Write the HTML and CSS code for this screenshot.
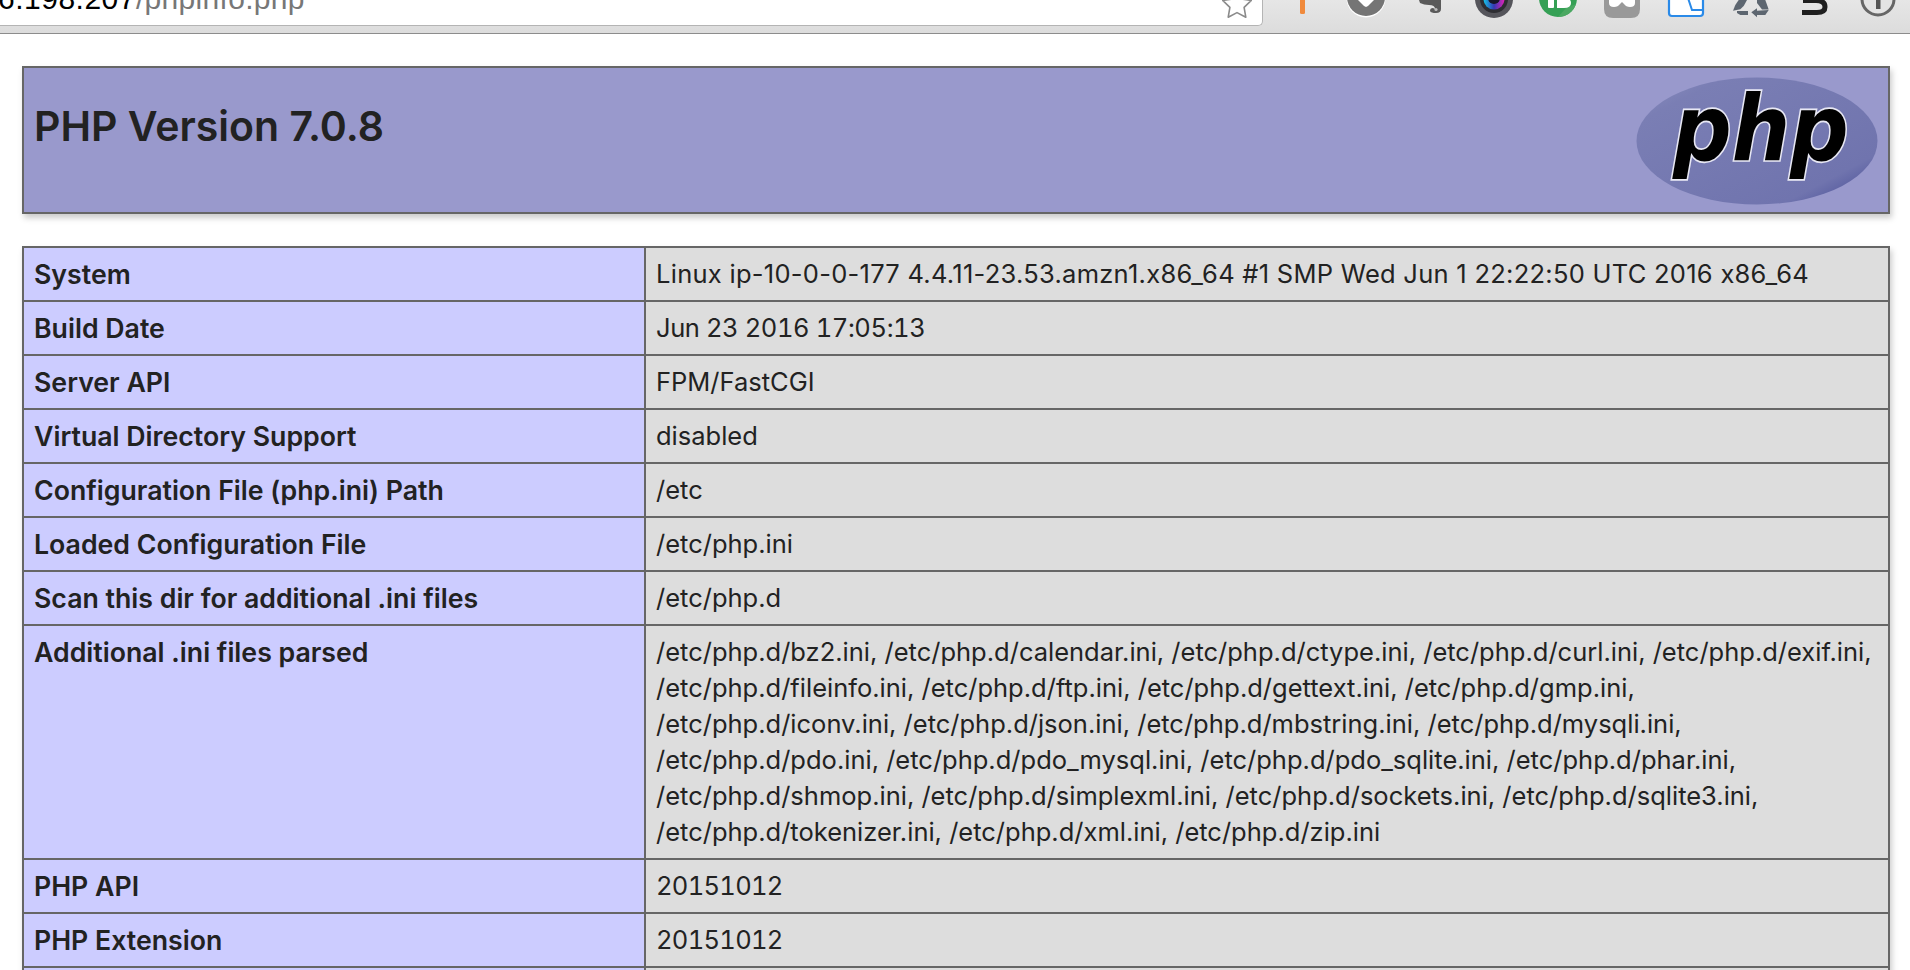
FILE: index.html
```html
<!DOCTYPE html>
<html lang="en">
<head>
<meta charset="utf-8">
<title>phpinfo()</title>
<link rel="stylesheet" href="styles.css">
</head>
<body>
<div class="toolbar">
  <div class="omnibox">
    <div class="url"><span class="host">6.198.207</span><span class="path">/phpinfo.php</span></div>
    <svg class="star" width="30" height="25" viewBox="0 0 30 25"><polygon points="15,-10 19.4,-1 29.3,0.4 22.1,7.4 23.8,17.2 15,12.6 6.2,17.2 7.9,7.4 0.7,0.4 10.6,-1" fill="#fff" stroke="#8a8a8a" stroke-width="1.6" stroke-linejoin="round"/></svg>
  </div>
  <div class="tools">
    <svg class="tool" viewBox="0 0 64 34"><rect x="30" y="-2" width="5" height="16" rx="1.5" fill="#f08a3c"/></svg>
    <svg class="tool" viewBox="0 0 64 34"><circle cx="32" cy="-2" r="19.5" fill="#fff"/><circle cx="32" cy="-3" r="19" fill="#757575"/><polygon points="22,-2 42,-2 34,6 32,7 30,6" fill="#fff"/></svg>
    <svg class="tool" viewBox="0 0 64 34"><path d="M21 0 H43 V9 Q43 13 38 13 Q33 13 32 11 Q32 8 35 8 L37 9 Q37 5 31 5 Q26 5 22 3 Z" fill="#5a5a5a"/><circle cx="38" cy="9.5" r="1.6" fill="#bbb"/></svg>
    <svg class="tool" viewBox="0 0 64 34"><defs><linearGradient id="lens" x1="0" x2="1" y1="0" y2="0"><stop offset="0" stop-color="#15c4e8"/><stop offset=".5" stop-color="#3438b0"/><stop offset="1" stop-color="#e323b8"/></linearGradient></defs><circle cx="32" cy="-1" r="19" fill="#55555b"/><circle cx="32" cy="-1" r="14" fill="#2d2d32"/><circle cx="32" cy="-1" r="10.5" fill="url(#lens)"/><circle cx="32" cy="-2" r="6" fill="#161628"/></svg>
    <svg class="tool" viewBox="0 0 64 34"><circle cx="32" cy="-2" r="19" fill="#35a055"/><path d="M32 17 A19 19 0 0 0 50 4 L40 8 Z" fill="#4ba862"/><rect x="22" y="-2" width="6" height="10" rx="1" fill="#fff"/><path d="M31 -2 H38 Q45 -2 45 3 Q45 8 38 8 H31 Z" fill="#fff"/></svg>
    <svg class="tool" viewBox="0 0 64 34"><path d="M14 -2 H50 V9 Q50 18 41 18 H23 Q14 18 14 9 Z" fill="#999"/><path d="M19 0 H45 V3 Q45 7 40 7 Q36 7 34 4 L32 2 L30 4 Q28 7 24 7 Q19 7 19 3 Z" fill="#fff"/></svg>
    <svg class="tool" viewBox="0 0 64 34"><path d="M15 -2 V13 Q15 16 18 16 H46 Q49 16 49 13 V-2" fill="#fff" stroke="#2a8ae8" stroke-width="2.2"/><path d="M34 -2 L38 10 H49" fill="none" stroke="#2a8ae8" stroke-width="2"/></svg>
    <svg class="tool" viewBox="0 0 64 34" fill="#5d6670"><polygon points="20.7,0 29,0 25.7,6 22.3,9.3 15,10.7 17.3,5"/><polygon points="19,11 30,11 30,15 22.3,15 19,13"/><polygon points="39,0 47.3,0 50.7,9.5 44,9.5 39,3"/><polygon points="33.3,12.3 39,8.3 39,10.7 50.7,10 47.3,15 39,15 39,17.3"/></svg>
    <svg class="tool" viewBox="0 0 64 34"><path d="M21 0.5 H34 Q43 0.5 43 7 Q43 12.5 35 12.5 H20" fill="none" stroke="#1f1f1f" stroke-width="5"/></svg>
    <svg class="tool" viewBox="0 0 64 34"><circle cx="32" cy="-1" r="16" fill="#e4e4e4" stroke="#666" stroke-width="3"/><rect x="30" y="-2" width="4.5" height="11" fill="#555"/></svg>
  </div>
</div>
<main class="page">
  <header class="banner">
    <h1 class="version">PHP Version 7.0.8</h1>
    <svg class="logo" width="242" height="128" viewBox="0 0 242 128">
      <defs>
        <linearGradient id="oval" x1="0" y1="0" x2="1" y2="1"><stop offset="0" stop-color="#8c90c0"/><stop offset=".18" stop-color="#7a7eb4"/><stop offset=".8" stop-color="#7074ae"/><stop offset="1" stop-color="#3e4490"/></linearGradient>
      </defs>
      <ellipse cx="121" cy="64" rx="120.5" ry="63.5" fill="url(#oval)"/>
      <text class="logo-text" x="0" y="0" transform="translate(37 83) scale(1 1.1)">php</text>
    </svg>
  </header>
  <table class="info">
    <colgroup><col class="label-col"><col></colgroup>
    <tbody>
      <tr><th>System</th><td class="system">Linux ip-10-0-0-177 4.4.11-23.53.amzn1.x86_64 #1 SMP Wed Jun 1 22:22:50 UTC 2016 x86_64</td></tr>
      <tr><th>Build Date</th><td class="date">Jun 23 2016 17:05:13</td></tr>
      <tr><th>Server API</th><td>FPM/FastCGI</td></tr>
      <tr><th>Virtual Directory Support</th><td>disabled</td></tr>
      <tr><th>Configuration File (php.ini) Path</th><td>/etc</td></tr>
      <tr><th>Loaded Configuration File</th><td>/etc/php.ini</td></tr>
      <tr><th>Scan this dir for additional .ini files</th><td>/etc/php.d</td></tr>
      <tr><th>Additional .ini files parsed</th><td>/etc/php.d/bz2.ini, /etc/php.d/calendar.ini, /etc/php.d/ctype.ini, /etc/php.d/curl.ini, /etc/php.d/exif.ini,<br>/etc/php.d/fileinfo.ini, /etc/php.d/ftp.ini, /etc/php.d/gettext.ini, /etc/php.d/gmp.ini,<br>/etc/php.d/iconv.ini, /etc/php.d/json.ini, /etc/php.d/mbstring.ini, /etc/php.d/mysqli.ini,<br>/etc/php.d/pdo.ini, /etc/php.d/pdo_mysql.ini, /etc/php.d/pdo_sqlite.ini, /etc/php.d/phar.ini,<br>/etc/php.d/shmop.ini, /etc/php.d/simplexml.ini, /etc/php.d/sockets.ini, /etc/php.d/sqlite3.ini,<br>/etc/php.d/tokenizer.ini, /etc/php.d/xml.ini, /etc/php.d/zip.ini</td></tr>
      <tr><th>PHP API</th><td class="digits">20151012</td></tr>
      <tr><th>PHP Extension</th><td class="digits">20151012</td></tr>
      <tr><th>Zend Extension</th><td class="digits">320151012</td></tr>
    </tbody>
  </table>
</main>
</body>
</html>
```
FILE: styles.css
```css
html, body {
  margin: 0;
  height: 100%;
  overflow: hidden;
  background: #fff;
  color: #222;
  font-family: Inter, "Liberation Sans", Arial, sans-serif;
  font-feature-settings: "calt" 0;
}
.toolbar {
  display: flex;
  height: 33px;
  border-bottom: 1px solid #8c8c8c;
  background: linear-gradient(#e6e6e6, #dcdcdc);
}
.omnibox {
  display: flex;
  justify-content: space-between;
  box-sizing: border-box;
  width: 1263px;
  height: 26px;
  margin-right: 7px;
  padding-right: 10px;
  overflow: hidden;
  background: #fff;
  border-right: 1px solid #b4b4b4;
  border-bottom: 1px solid #b4b4b4;
  border-bottom-right-radius: 5px;
}
.url {
  margin: -21px 0 0 -2px;
  font-family: "Liberation Sans", Arial, sans-serif;
  font-size: 30px;
  line-height: 40px;
  white-space: nowrap;
}
.host { color: #000; letter-spacing: 0.5px; }
.path { color: #777; letter-spacing: 0.3px; }
.star { flex: none; }
.tools { display: flex; }
.tool {
  display: block;
  width: 64px;
  height: 34px;
  flex: none;
}
.page {
  padding: 32px 20px 0 22px;
}
.banner {
  display: flex;
  justify-content: space-between;
  align-items: flex-start;
  box-sizing: border-box;
  height: 148px;
  padding: 9px 10px 0;
  background: #99c;
  border: 2px solid #666;
  box-shadow: 2px 4px 6px #ccc;
}
.version {
  margin: 25px 0 0;
  font-size: 41px;
  line-height: 48px;
  font-weight: 600;
  color: #222;
}
.logo { flex: none; }
.logo-text {
  font-family: "DejaVu Sans", sans-serif;
  font-size: 82px;
  font-weight: 700;
  font-style: italic;
  fill: #000;
  stroke: #e8e8f4;
  stroke-width: 3px;
  paint-order: stroke;
}
.info {
  box-sizing: border-box;
  width: 1868px;
  margin-top: 32px;
  border-collapse: collapse;
  table-layout: fixed;
  box-shadow: 2px 4px 6px #ccc;
  font-size: 25.5px;
  line-height: 36px;
}
.label-col { width: 622px; }
.info th,
.info td {
  padding: 8px 9px 8px 10px;
  border: 2px solid #666;
  vertical-align: top;
  text-align: left;
  white-space: nowrap;
}
.info th {
  background: #ccf;
  font-size: 26.7px;
  font-weight: 600;
  color: #222;
}
.info td {
  background: #ddd;
  color: #222;
}
.info .system { letter-spacing: 0.27px; }
.info .date {
  font-feature-settings: "calt" 0, "tnum" 1;
  letter-spacing: -0.4px;
}
.info .digits {
  font-feature-settings: "calt" 0, "tnum" 1;
  letter-spacing: -0.7px;
}
```
